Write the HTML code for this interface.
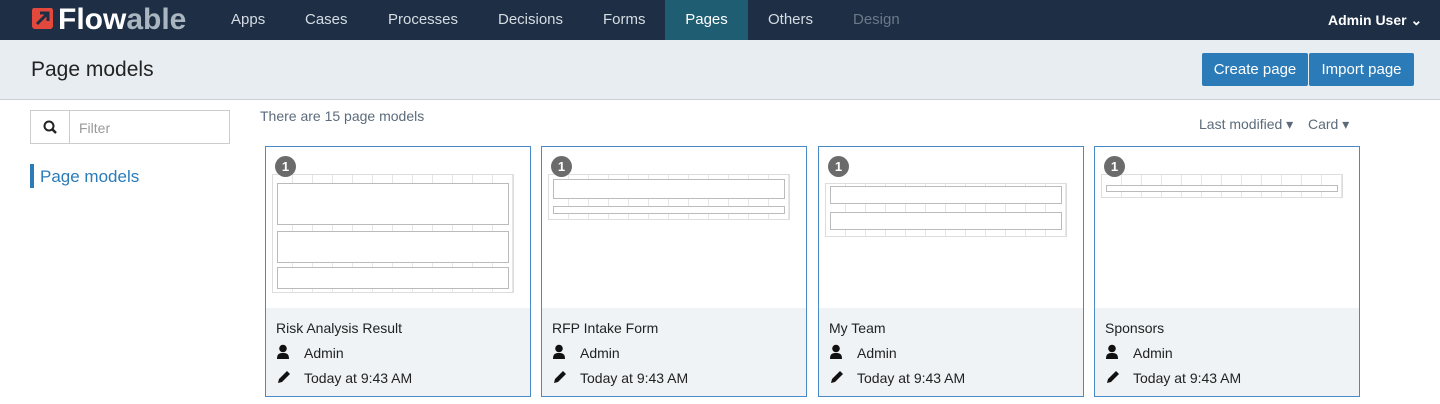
<!DOCTYPE html><html><head><style>
body{margin:0;width:1440px;height:404px;overflow:hidden;font-family:"Liberation Sans",sans-serif;background:#fff;position:relative}
.nav{position:absolute;left:0;top:0;width:1440px;height:40px;background:#1e2f45}
.nav a{position:absolute;top:0;height:40px;line-height:40px;color:#d5dce3;font-size:15px}
.hdr{position:absolute;top:40px;left:0;width:1440px;height:59px;background:#e8edf1;border-bottom:1px solid #c9cfd5}
.btn{position:absolute;top:53px;height:33px;line-height:33px;background:#2b7bb8;color:#fff;font-size:15px;text-align:center;border-radius:2px}
.card{position:absolute;top:146px;width:264px;height:249px;border:1px solid #4a8ac4;background:#fff}
.foot{position:absolute;left:0;right:0;top:161px;bottom:0;background:#eff3f6}
.foot div{position:absolute;left:10px;font-size:14px;color:#222}
.foot svg{position:absolute;left:10px}
.badge{position:absolute;left:9px;top:9px;width:21px;height:21px;border-radius:50%;background:#6b6b6b;color:#fff;font-size:13px;font-weight:bold;text-align:center;line-height:21px}
.th{position:absolute;left:6px;border:1px solid #ddd;background:repeating-linear-gradient(90deg,#fff 0,#fff 19px,#e6e6e6 19px,#e6e6e6 20px)}
.bx{position:absolute;left:4px;right:4px;border:1px solid #bbb;background:#fff}
</style></head><body>
<div class="nav">
<svg style="position:absolute;left:30px;top:6px" width="25" height="25" viewBox="0 0 25 25"><path d="M3 2h19l1 2v17l-2 2H4l-2-2V4z" fill="#e2483b"/><path d="M7 18L17 8M10 7h8v8" stroke="#1e2f45" stroke-width="3" fill="none"/></svg>
<span style="position:absolute;left:58px;top:3px;font-size:30px;font-weight:bold;color:#fff;letter-spacing:0">Flow<span style="color:#a9b6c0">able</span></span>
<a style="left:231px">Apps</a><a style="left:305px">Cases</a><a style="left:388px">Processes</a><a style="left:498px">Decisions</a><a style="left:603px">Forms</a>
<a style="left:665px;width:83px;background:#1f5d72;color:#fff;text-align:center">Pages</a>
<a style="left:768px">Others</a><a style="left:853px;color:#6b7886">Design</a>
<a style="left:1328px;color:#fff;font-size:14px;font-weight:bold">Admin User ⌄</a>
</div>
<div class="hdr"><span style="position:absolute;left:31px;top:18px;font-size:21px;color:#222">Page models</span></div>
<div class="btn" style="left:1202px;width:106px">Create page</div>
<div class="btn" style="left:1309px;width:105px">Import page</div>
<div style="position:absolute;left:30px;top:110px;width:198px;height:32px;border:1px solid #ccc">
<div style="position:absolute;left:0;top:0;width:38px;height:32px;border-right:1px solid #ccc"></div>
<svg style="position:absolute;left:12px;top:9px" width="14" height="14"><circle cx="6" cy="6" r="4.5" stroke="#222" stroke-width="2" fill="none"/><path d="M9 9l4 4" stroke="#222" stroke-width="2.5"/></svg>
<span style="position:absolute;left:48px;top:9px;font-size:14px;color:#999">Filter</span></div>
<div style="position:absolute;left:30px;top:164px;width:4px;height:24px;background:#2b7bb8"></div>
<span style="position:absolute;left:40px;top:167px;font-size:17px;color:#2b7bb8">Page models</span>
<span style="position:absolute;left:260px;top:108px;font-size:14px;color:#5b6b7b">There are 15 page models</span>
<span style="position:absolute;left:1199px;top:116px;font-size:14px;color:#5b6b7b">Last modified ▾</span>
<span style="position:absolute;left:1308px;top:116px;font-size:14px;color:#5b6b7b">Card ▾</span>

<svg width="0" height="0" style="position:absolute"><defs>
<g id="u"><circle cx="7" cy="4.5" r="3.8" fill="#111"/><path d="M1 15c0-5 2-6 6-6s6 1 6 6z" fill="#111"/></g>
<g id="p"><path d="M2 14l1-4 8-8 3 3-8 8z" fill="#111"/></g></defs></svg>

<div class="card" style="left:265px"><div class="th" style="top:27px;width:240px;height:117px"><div class="bx" style="top:8px;height:40px"></div><div class="bx" style="top:56px;height:30px"></div><div class="bx" style="top:92px;height:20px"></div></div><div class="badge">1</div>
<div class="foot"><div style="top:12px">Risk Analysis Result</div><svg style="top:36px" width="15" height="16"><use href="#u"/></svg><div style="left:38px;top:37px">Admin</div><svg style="top:61px" width="16" height="16"><use href="#p"/></svg><div style="left:38px;top:62px">Today at 9:43 AM</div></div></div>
<div class="card" style="left:541px"><div class="th" style="top:27px;width:240px;height:44px"><div class="bx" style="top:4px;height:18px"></div><div class="bx" style="top:31px;height:6px"></div></div><div class="badge">1</div>
<div class="foot"><div style="top:12px">RFP Intake Form</div><svg style="top:36px" width="15" height="16"><use href="#u"/></svg><div style="left:38px;top:37px">Admin</div><svg style="top:61px" width="16" height="16"><use href="#p"/></svg><div style="left:38px;top:62px">Today at 9:43 AM</div></div></div>
<div class="card" style="left:818px"><div class="th" style="top:36px;width:240px;height:52px"><div class="bx" style="top:2px;height:16px"></div><div class="bx" style="top:28px;height:16px"></div></div><div class="badge">1</div>
<div class="foot"><div style="top:12px">My Team</div><svg style="top:36px" width="15" height="16"><use href="#u"/></svg><div style="left:38px;top:37px">Admin</div><svg style="top:61px" width="16" height="16"><use href="#p"/></svg><div style="left:38px;top:62px">Today at 9:43 AM</div></div></div>
<div class="card" style="left:1094px"><div class="th" style="top:27px;width:240px;height:22px"><div class="bx" style="top:10px;height:5px"></div></div><div class="badge">1</div>
<div class="foot"><div style="top:12px">Sponsors</div><svg style="top:36px" width="15" height="16"><use href="#u"/></svg><div style="left:38px;top:37px">Admin</div><svg style="top:61px" width="16" height="16"><use href="#p"/></svg><div style="left:38px;top:62px">Today at 9:43 AM</div></div></div>
</body></html>
